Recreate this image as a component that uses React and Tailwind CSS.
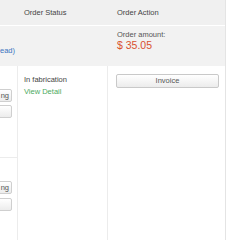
const font = { fontFamily: '"Liberation Sans", Arial, sans-serif' }

const SideButton = ({ label, className = "" }) => (
  <div
    className={`-ml-[48px] w-[60px] h-[13px] flex items-center justify-end pr-[2px] border border-[#cfcfcf] rounded-[2px] bg-gradient-to-b from-white to-[#ececec] text-[7.5px] text-[#555] ${className}`}
  >
    {label}
  </div>
)

export default function App() {
  return (
    <div className="w-[240px] h-[240px] bg-white overflow-hidden" style={font}>
      <div className="w-[226px] h-full flex flex-col border-r border-[#e4e4e4]">
        {/* header */}
        <div className="h-[25px] shrink-0 flex items-center bg-[#f0f0f0] text-[7.5px] text-[#444]">
          <div className="w-[18px]" />
          <div className="w-[90px] pl-[6px]">Order Status</div>
          <div className="pl-[9px]">Order Action</div>
        </div>
        <div className="h-[1px] shrink-0 bg-white" />
        {/* order info row */}
        <div className="h-[40px] shrink-0 flex bg-[#f2f2f2]">
          <div className="w-[108px] pt-[19px] text-[7.5px] text-[#3a72c0]">ead)</div>
          <div className="pl-[9px] pt-[4px]">
            <div className="text-[7.5px] leading-[9px] text-[#555]">Order amount:</div>
            <div className="text-[10.5px] leading-[13px] text-[#d9502f]">$ 35.05</div>
          </div>
        </div>
        {/* body */}
        <div className="flex-1 flex">
          <div className="w-[18px] shrink-0 border-r border-[#ececec] overflow-hidden flex flex-col">
            <div className="h-[92px] flex flex-col border-b border-[#ececec]">
              <SideButton label="ng" className="mt-[23px]" />
              <SideButton label="" className="mt-[3px]" />
            </div>
            <SideButton label="ng" className="mt-[23px]" />
            <SideButton label="" className="mt-[4px]" />
          </div>
          <div className="w-[90px] shrink-0 border-r border-[#ececec] pl-[6px] pt-[8px] text-[7.5px] leading-[12px]">
            <div className="text-[#444]">In fabrication</div>
            <div className="text-[#4caa5e]">View Detail</div>
          </div>
          <div className="flex-1 pl-[8px] pr-[6px] pt-[8px]">
            <div className="h-[14px] flex items-center justify-center border border-[#c9c9c9] rounded-[2px] bg-gradient-to-b from-white to-[#ececec] text-[7.5px] text-[#555]">
              Invoice
            </div>
          </div>
        </div>
      </div>
    </div>
  )
}
